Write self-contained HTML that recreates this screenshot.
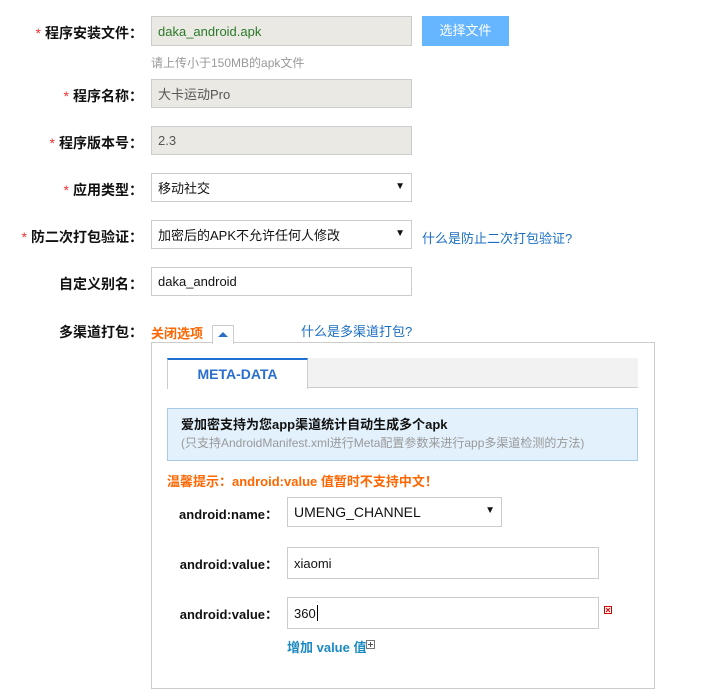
<!DOCTYPE html>
<html><head><meta charset="utf-8"><style>
body{margin:0;width:709px;height:700px;background:#fff;position:relative;font-family:"Liberation Sans","Noto Sans CJK SC",sans-serif;font-size:13px;color:#333;overflow:hidden}
.a{position:absolute}
.lbl{position:absolute;right:566px;font-weight:bold;font-size:14px;color:#111;white-space:nowrap}
.lbl i{color:#e33;font-style:normal;font-weight:normal;margin-right:4px}
.in{position:absolute;box-sizing:border-box;border:1px solid #ccc;background:#fff;padding-left:6px;display:flex;align-items:center;font-size:13px}
.dis{background:#ebe9e3;color:#555}
.sel:after{content:"▼";position:absolute;right:6px;top:50%;margin-top:-7px;font-size:10px;line-height:12px;color:#111}
.sl{position:absolute;font-weight:bold;font-size:13px;color:#111;right:431px;white-space:nowrap}
</style></head><body>
<div class="lbl" style="top:23px"><i>*</i>程序安装文件：</div>
<div class="in dis" style="left:151px;top:16px;width:261px;height:30px;color:#2a7a2a">daka_android.apk</div>
<div class="a" style="left:422px;top:16px;width:87px;height:30px;background:#66b5ff;color:#fff;text-align:center;line-height:30px">选择文件</div>
<div class="a" style="left:151px;top:54px;color:#999;font-size:12px">请上传小于150MB的apk文件</div>
<div class="lbl" style="top:86px"><i>*</i>程序名称：</div>
<div class="in dis" style="left:151px;top:79px;width:261px;height:29px">大卡运动Pro</div>
<div class="lbl" style="top:133px"><i>*</i>程序版本号：</div>
<div class="in dis" style="left:151px;top:126px;width:261px;height:29px">2.3</div>
<div class="lbl" style="top:180px"><i>*</i>应用类型：</div>
<div class="in sel" style="left:151px;top:173px;width:261px;height:29px;color:#111">移动社交</div>
<div class="lbl" style="top:227px"><i>*</i>防二次打包验证：</div>
<div class="in sel" style="left:151px;top:220px;width:261px;height:29px;color:#111">加密后的APK不允许任何人修改</div>
<div class="a" style="left:422px;top:228px;color:#1a6fc4">什么是防止二次打包验证?</div>
<div class="lbl" style="top:274px">自定义别名：</div>
<div class="in" style="left:151px;top:267px;width:261px;height:29px;color:#111">daka_android</div>
<div class="lbl" style="top:322px">多渠道打包：</div>
<div class="a" style="left:151px;top:323px;color:#f60;font-weight:bold">关闭选项</div>
<div class="a" style="left:151px;top:342px;width:502px;height:345px;border:1px solid #ccc"></div>
<div class="a" style="left:212px;top:325px;width:20px;height:18px;border:1px solid #ccc;border-bottom:none;background:#fff;z-index:2"><div class="a" style="left:5px;top:6px;width:0;height:0;border-left:5px solid transparent;border-right:5px solid transparent;border-bottom:5px solid #2b6fc2"></div></div>
<div class="a" style="left:301px;top:321px;color:#1a6fc4">什么是多渠道打包?</div>
<div class="a" style="left:167px;top:358px;width:471px;height:29px;background:#f2f2f2;border-bottom:1px solid #ccc"></div>
<div class="a" style="left:167px;top:358px;width:141px;background:#fff;border-top:2px solid #1e6fd0;border-right:1px solid #ccc;border-left:1px solid #ccc;box-sizing:border-box;height:31px;text-align:center;line-height:28px;font-weight:bold;color:#2a6fd0;font-size:14px">META-DATA</div>
<div class="a" style="left:167px;top:408px;width:471px;height:53px;box-sizing:border-box;background:#e3f1fc;border:1px solid #a9cbe8;padding:8px 0 0 13px">
<div style="font-weight:bold;color:#111;font-size:13px;line-height:16px">爱加密支持为您app渠道统计自动生成多个apk</div>
<div style="color:#999;font-size:12px;line-height:20px">(只支持AndroidManifest.xml进行Meta配置参数来进行app多渠道检测的方法)</div></div>
<div class="a" style="left:167px;top:471px;color:#f60;font-weight:bold;font-size:13px">温馨提示：android:value 值暂时不支持中文！</div>
<div class="sl" style="top:504px">android:name：</div>
<div class="in sel" style="left:287px;top:497px;width:215px;height:30px;color:#111;font-size:14px">UMENG_CHANNEL</div>
<div class="sl" style="top:554px">android:value：</div>
<div class="in" style="left:287px;top:547px;width:312px;height:32px;color:#111">xiaomi</div>
<div class="sl" style="top:604px">android:value：</div>
<div class="in" style="left:287px;top:597px;width:312px;height:32px;color:#111">360<span style="display:inline-block;height:16px;border-left:1px solid #000;margin-left:1px"></span></div>
<div class="a" style="left:604px;top:606px;width:8px;height:8px;border:1px solid #d00;box-sizing:border-box"><svg width="6" height="6" style="position:absolute;left:0;top:0"><path d="M1 1L5 5M5 1L1 5" stroke="#d00" stroke-width="1"/></svg></div>
<div class="a" style="left:287px;top:637px;color:#1a8ac4;font-weight:bold">增加 value 值</div>
<div class="a" style="left:366px;top:640px;width:9px;height:9px;border:1px solid #777;box-sizing:border-box"><svg width="7" height="7" style="position:absolute;left:0;top:0"><path d="M1 3.5H6M3.5 1V6" stroke="#555" stroke-width="1"/></svg></div>
</body></html>
